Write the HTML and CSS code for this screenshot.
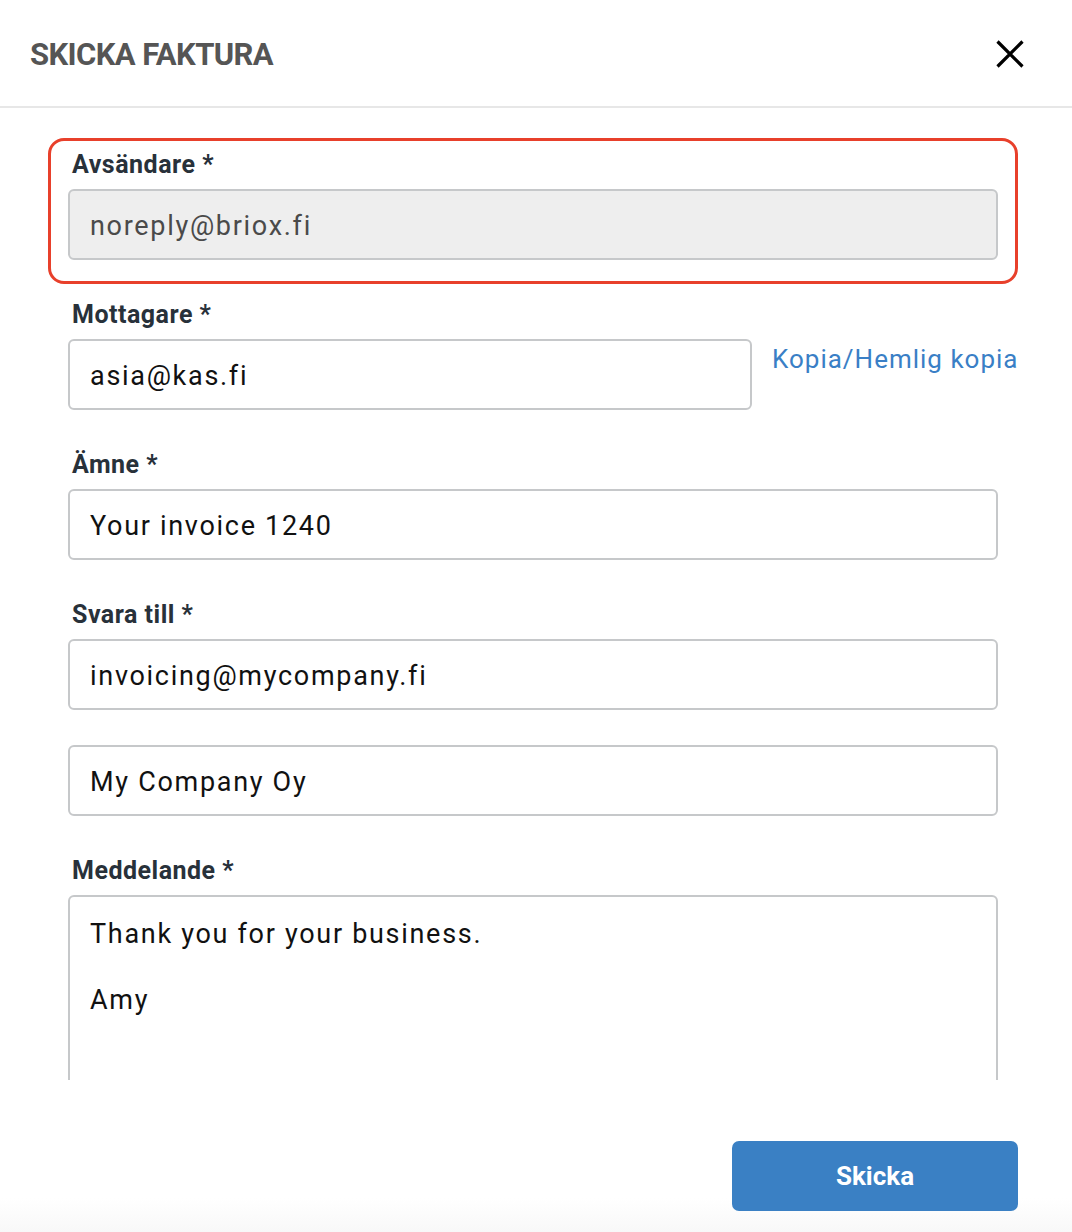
FILE: index.html
```html
<!DOCTYPE html>
<html lang="sv">
<head>
<meta charset="utf-8">
<title>Skicka faktura</title>
<link rel="stylesheet" href="styles.css">
</head>
<body>
<div class="dialog">
  <header class="header">
    <h1 class="title">SKICKA FAKTURA</h1>
    <button class="close" aria-label="Stäng">
      <svg width="28" height="28" viewBox="0 0 28 28"><path d="M1.5 1.5 L26.5 26.5 M26.5 1.5 L1.5 26.5" stroke="#000" stroke-width="3.2" fill="none"/></svg>
    </button>
  </header>
  <main class="body">
    <div class="field field-highlight">
      <div class="label">Avsändare *</div>
      <div class="input input-disabled">noreply@briox.fi</div>
    </div>
    <div class="field">
      <div class="label">Mottagare *</div>
      <div class="row">
        <div class="input">asia@kas.fi</div>
        <a class="link" href="#">Kopia/Hemlig kopia</a>
      </div>
    </div>
    <div class="field">
      <div class="label">Ämne *</div>
      <div class="input">Your invoice 1240</div>
    </div>
    <div class="field">
      <div class="label">Svara till *</div>
      <div class="input">invoicing@mycompany.fi</div>
    </div>
    <div class="field field-nolabel">
      <div class="input">My Company Oy</div>
    </div>
    <div class="field">
      <div class="label">Meddelande *</div>
      <div class="textarea">Thank you for your business.<br><br>Amy<br><br><br></div>
    </div>
  </main>
  <footer class="footer">
    <button class="send">Skicka</button>
  </footer>
</div>
</body>
</html>
```
FILE: styles.css
```css
html, body {
  margin: 0;
  padding: 0;
  background: #fff;
}
body {
  font-family: Roboto, "Liberation Sans", Arial, sans-serif;
  width: 1072px;
  height: 1232px;
  overflow: hidden;
}
.dialog {
  display: flex;
  flex-direction: column;
  height: 1232px;
}
.header {
  height: 106px;
  flex: 0 0 auto;
  border-bottom: 2px solid #e7e7e7;
  display: flex;
  align-items: center;
  justify-content: space-between;
  padding: 0 48px 0 30px;
}
.title {
  margin: 4px 0 0 0;
  font-size: 31px;
  font-weight: 700;
  color: #555;
  letter-spacing: -0.6px;
  line-height: 36px;
}
.close {
  border: 0;
  background: none;
  padding: 0;
  width: 28px;
  height: 28px;
  display: flex;
  margin-top: 2px;
}
.body {
  height: 972px;
  flex: 0 0 auto;
  overflow: hidden;
  box-sizing: border-box;
  padding: 30px 54px 0 48px;
}
.field {
  border: 3px solid transparent;
  border-radius: 16px;
  padding: 10px 17px 21px 17px;
  margin-bottom: 4px;
}
.field-highlight {
  border-color: #e8402b;
}
.field-nolabel {
  padding-top: 4px;
}
.label {
  font-size: 25px;
  line-height: 28px;
  font-weight: 700;
  color: #28313a;
  padding-left: 4px;
  margin-bottom: 10px;
  letter-spacing: 0.5px;
}
.input {
  box-sizing: border-box;
  height: 71px;
  border: 2px solid #c6c8ca;
  border-radius: 6px;
  padding: 2px 20px 0 20px;
  font-size: 27px;
  line-height: 67px;
  letter-spacing: 1.7px;
  color: #111;
  background: #fff;
  white-space: nowrap;
  overflow: hidden;
}
.input-disabled {
  background: #eeeeee;
  color: #4a4a4a;
}
.row {
  display: grid;
  grid-template-columns: 684px 1fr;
  column-gap: 20px;
  margin-right: -20px;
  align-items: start;
}
.link {
  font-size: 26px;
  line-height: 30px;
  padding-top: 5px;
  color: #3a7fc6;
  text-decoration: none;
  letter-spacing: 1px;
  white-space: nowrap;
}
.textarea {
  box-sizing: border-box;
  border: 2px solid #c6c8ca;
  border-radius: 6px;
  padding: 21px 20px 20px 20px;
  font-size: 27px;
  line-height: 33px;
  letter-spacing: 1.7px;
  color: #111;
  height: 300px;
}
.footer {
  flex: 1 1 auto;
  display: flex;
  justify-content: flex-end;
  align-items: flex-start;
  padding: 61px 54px 0 0;
  background: linear-gradient(to bottom, #fff 0, #fff 118px, #f8f8f8 152px);
}
.send {
  width: 286px;
  height: 70px;
  border: 0;
  border-radius: 7px;
  background: #3a80c4;
  color: #fff;
  font-family: Roboto, "Liberation Sans", Arial, sans-serif;
  font-size: 26px;
  font-weight: 700;
  padding: 0;
}
```
